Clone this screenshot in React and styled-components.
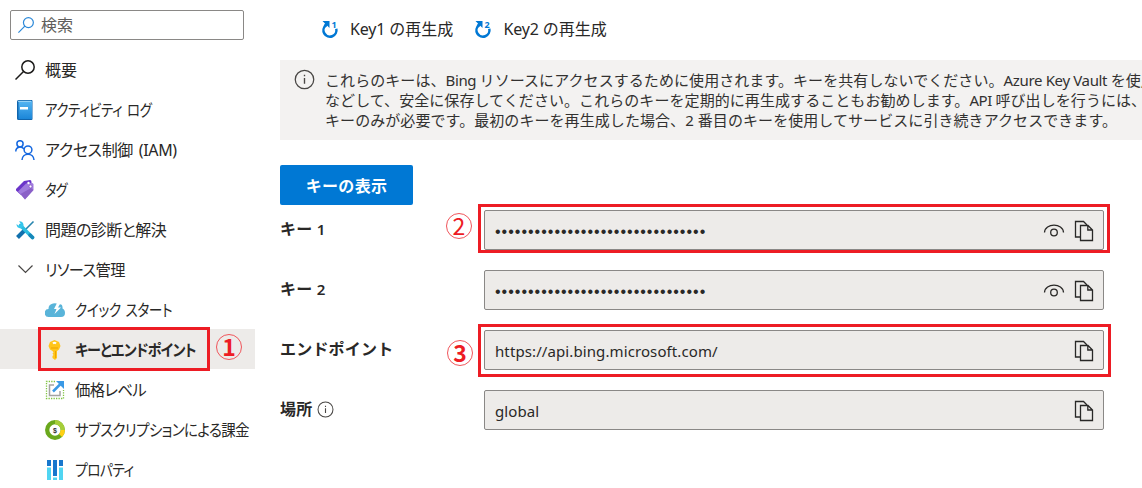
import React from "react";
import styled, { createGlobalStyle, css } from "styled-components";

const GlobalStyle = createGlobalStyle`
  * { box-sizing: border-box; }
  body {
    margin: 0;
    background: #fff;
    color: #292827;
    font-family: "Noto Sans", "Noto Sans CJK JP", sans-serif;
    font-size: 16px;
    overflow: hidden;
  }
`;

const Page = styled.div`
  position: relative;
  display: flex;
  width: 1142px;
  height: 488px;
  overflow: hidden;
`;

const Sidebar = styled.aside`
  flex: none;
  width: 255px;
  padding-top: 10px;
`;

const SearchBox = styled.div`
  display: flex;
  align-items: center;
  gap: 7px;
  width: 234px;
  height: 30px;
  margin: 0 0 9px 10px;
  padding-left: 7px;
  border: 1px solid #8a8886;
  border-radius: 2px;
  color: #605e5c;
  line-height: 20px;
`;

const NavItem = styled.div`
  display: flex;
  align-items: center;
  gap: 10px;
  height: 40px;
  padding-top: 2px;
  padding-left: ${(p) => (p.$nested ? 45 : 15)}px;
  background: ${(p) => (p.$active ? "#edebe9" : "transparent")};
  font-weight: ${(p) => (p.$active ? 700 : 400)};
  svg { flex: none; }
`;

const Label = styled.span`
  display: inline-block;
  white-space: nowrap;
  line-height: 24px;
  font-feature-settings: ${(p) => (p.$palt ? '"palt"' : "normal")};
  letter-spacing: ${(p) => p.$track || 0}px;
  word-spacing: ${(p) => (p.$palt ? 2 : 0)}px;
  transform: scaleX(${(p) => p.$narrow || 1});
  transform-origin: left center;
`;

const Main = styled.main`
  flex: none;
  width: 862px;
  margin-left: 25px;
`;

const Toolbar = styled.div`
  display: flex;
  align-items: center;
  gap: 21px;
  height: 60px;
  padding: 0 0 2px 41px;
`;

const ToolButton = styled.div`
  display: flex;
  align-items: center;
  gap: 8px;
  line-height: 22px;
  white-space: nowrap;
  span { margin-top: -1px; }
`;

const Latin = styled.span`
  letter-spacing: ${(p) => p.$track}px;
`;

const Notice = styled.section`
  display: flex;
  gap: 10px;
  height: 80px;
  padding: 10px 0 0 14px;
  background: #f3f2f1;
  color: #323130;
  font-size: 15px;
  line-height: 20px;
  svg { flex: none; margin-top: -1px; }
`;

const NoticeText = styled.div`
  white-space: nowrap;
  letter-spacing: 0.07px;
`;

const PrimaryButton = styled.div`
  display: flex;
  align-items: center;
  justify-content: center;
  width: 133px;
  height: 40px;
  margin: 25px 0 5px;
  border-radius: 2px;
  background: #0078d4;
  color: #fff;
  font-weight: 700;
  letter-spacing: 0.3px;
`;

const FieldRow = styled.div`
  display: flex;
  width: 824px;
  height: 40px;
  margin-bottom: 20px;
`;

const FieldLabel = styled.div`
  display: flex;
  align-items: center;
  gap: 5px;
  width: 204px;
  height: 35px;
  font-weight: 700;
  letter-spacing: 0.2px;
  white-space: nowrap;
  svg { margin-top: 3px; }
`;

const Digit = styled.span`
  font-size: 15px;
  font-weight: 600;
`;

const Field = styled.div`
  display: flex;
  align-items: center;
  width: 620px;
  height: 40px;
  padding: 2px 9px 0 10px;
  border: 1px solid #8a8886;
  border-radius: 2px;
  background: #edebe9;
  font-size: 15px;
  gap: 9px;
`;

const Value = styled.span`
  flex: 1;
  letter-spacing: ${(p) => p.$track || 0}px;
  ${(p) =>
    p.$masked &&
    css`
      padding-top: 2px;
      font-family: "Liberation Sans", sans-serif;
      font-size: 16px;
      letter-spacing: 1px;
    `}
`;

const Highlight = styled.div`
  position: absolute;
  left: ${(p) => p.$x}px;
  top: ${(p) => p.$y}px;
  width: ${(p) => p.$w}px;
  height: ${(p) => p.$h}px;
  border: 3px solid #ed1c24;
`;

const StepMark = styled.div`
  position: absolute;
  left: ${(p) => p.$x}px;
  top: ${(p) => p.$y}px;
  display: flex;
  align-items: center;
  justify-content: center;
  width: 26px;
  height: 26px;
  padding-bottom: 2px;
  border: 1.5px solid #f0555b;
  border-radius: 50%;
  color: #ed1c24;
  font: ${(p) => (p.$light ? 400 : 700)} 23px/22px "Noto Sans CJK JP", sans-serif;
`;

const Search = ({ size = 20, color = "#1b1a19", w = 1.5 }) => (
  <svg width={size} height={size} viewBox="0 0 20 20" fill="none" stroke={color} strokeWidth={w}>
    <circle cx="13" cy="7" r="6.2" />
    <path d="M8.5 11.5 0.5 19.5" />
  </svg>
);

const Book = () => (
  <svg width="20" height="20" viewBox="0 0 20 20">
    <defs><linearGradient id="book" x2="0" y2="1"><stop stopColor="#55b5f2" /><stop offset="1" stopColor="#1b86d8" /></linearGradient></defs>
    <path d="M3.5 0H16.500a1 1 0 0 1 1 1v18a1 1 0 0 1-1 1H3.500A1.500 1.500 0 0 1 2 18.500v-17A1.500 1.500 0 0 1 3.500 0Z" fill="#1065ad" />
    <path d="M3.500 1h13.500v18H3.500z" fill="url(#book)" />
    <path d="M3 1.300h13" stroke="#a6d9f8" />
    <path d="M5 7h8v2.500H5z" fill="#fff" />
  </svg>
);

const People = () => (
  <svg width="20" height="20" viewBox="0 0 20 20" fill="none" stroke="#1769e0" strokeWidth="1.500">
    <circle cx="5" cy="3.800" r="3.100" />
    <path d="M.8 11.500C.8 6.500 6.500 6 9 9" />
    <circle cx="13" cy="9.800" r="3.900" />
    <path d="M7 20c.5-7.800 11.500-7.800 12 0" />
  </svg>
);

const Tag = () => (
  <svg width="20" height="20" viewBox="0 0 20 20">
    <path d="M1 9 9 1l6-1q1.500 0 1.500 2v4L6 15 1 10.500Z" fill="#6b35c9" />
    <path d="m3 11.500 8-8 6-.5q1.500 0 1.500 1.500V10l-8.500 9.500Z" fill="#a07bdd" />
    <path d="m5.500 14 10.500-6 2.500 2-8.500 9.500Z" fill="#8055bd" opacity=".7" />
    <circle cx="13.500" cy="3" r="1.200" fill="#fff" />
    <circle cx="15.500" cy="6.500" r="1.400" fill="#fff" stroke="#7644bb" strokeWidth=".6" />
  </svg>
);

const Tools = () => (
  <svg width="20" height="20" viewBox="0 0 20 20" fill="none">
    <path d="M18.500 1.500 10 10" stroke="#2785ae" strokeWidth="1.600" />
    <path d="m10.500 9.500-8 8" stroke="#1170ad" strokeWidth="4" />
    <path d="m5.500 5.500 12 12" stroke="#2bbde0" strokeWidth="3.600" strokeLinecap="round" />
    <path d="M4 1.300q5 0 4.500 5L6 8.500Q1.500 8 1.500 4L4 6l2-2Z" fill="#35c6ec" />
    <path d="m15 15 2.500 2.500" stroke="#1787b8" strokeWidth="3.500" strokeLinecap="round" />
  </svg>
);

const Chevron = () => (
  <svg width="20" height="20" viewBox="0 0 20 20" fill="none" stroke="#484644" strokeWidth="1.200">
    <path d="m3.500 5.500 7 7 7-7" />
  </svg>
);

const Cloud = () => (
  <svg width="20" height="20" viewBox="0 0 20 20">
    <path d="M4 17a4 4 0 0 1-.5-8A5.500 5.500 0 0 1 8 3.500q3-1 5 1Q18 3 17.500 8.500q2.500 1 2.500 4.500 0 4-4 4Z" fill="#59b4d9" />
    <path d="m12 3-3 6h2.500L9.500 14 16 7.500h-3L15.500 3Z" fill="#fff" />
  </svg>
);

const Key = () => (
  <svg width="20" height="20" viewBox="0 0 20 20">
    <path d="M9.500 0 14 2l1.500 4L14 9.500 12 11v7l-2 2-2.500-2v-2l1-1-1-1.500 1-1-1-1.500L5 9.500 3.500 6 5 2Z" fill="#ffc51b" />
    <path d="M8 3.500q1.500-1.500 3 0" stroke="#fff" strokeWidth="2" fill="none" />
    <path d="M6 8h7M10.500 11v7" stroke="#efa300" strokeWidth="1" />
  </svg>
);

const Resize = () => (
  <svg width="20" height="20" viewBox="0 0 20 20" fill="none">
    <path d="M10 1.500H1.500v17h17V10" stroke="#7fc241" strokeWidth="1.300" strokeDasharray="1.300 1.200" />
    <path d="M9 5H4.500v10.500H15V11" stroke="#a3a3a3" strokeWidth="1.500" />
    <path d="m8 11.500 7.500-7.500" stroke="#3999e6" strokeWidth="2.500" />
    <path d="M11 1H19v8Z" fill="#3999e6" />
  </svg>
);

const Billing = () => (
  <svg width="20" height="20" viewBox="0 0 20 20">
    <g fill="none" strokeWidth="4.300">
      <circle cx="10" cy="10" r="7.800" stroke="#6aa81c" />
      <path d="M10 2.200A7.800 7.800 0 0 1 17.800 10" stroke="#a6ce39" />
      <path d="M17.800 10A7.800 7.800 0 0 1 15.500 15.500" stroke="#ffd013" />
    </g>
    <text x="10" y="12.500" textAnchor="middle" fontFamily="Liberation Sans, sans-serif" fontSize="7" fontWeight="700" fill="#333">$</text>
  </svg>
);

const Bars = () => (
  <svg width="20" height="20" viewBox="0 0 20 20">
    <path d="M2 0h4v20H2zM8 0h4v20H8zM14 0h4v20h-4z" fill="#50d5f2" />
    <path d="M2 0h4v6H2zM8 0h4v16H8zM14 0h4v6h-4z" fill="#1877cd" />
    <path d="M2 6h4v1.500H2zM8 16h4v1.500H8zM14 6h4v1.500h-4z" fill="#fff" />
  </svg>
);

const Regenerate = ({ n }) => (
  <svg width="21" height="20" viewBox="0 0 21 20">
    <path d="M4.800 6.200A6.500 6.500 0 1 0 15.300 9.800" fill="none" stroke="#0078d4" strokeWidth="2.500" />
    <path d="M1.500 2H8.500v7L6.300 6.800 4.500 8.500 2.800 6.500 4 4.500Z" fill="#0078d4" />
    <text x="10.500" y="8.500" fontFamily="Noto Sans, sans-serif" fontSize="9" fontWeight="700" fill="#0078d4">{n}</text>
  </svg>
);

const Info = ({ size }) => (
  <svg width={size} height={size} viewBox="0 0 20 20" fill="none" stroke="#484644">
    <circle cx="10" cy="10" r="8.800" strokeWidth="1.200" />
    <path d="M10 8.500V14M10 5.500v1.500" strokeWidth="1.300" />
  </svg>
);

const Eye = () => (
  <svg width="22" height="20" viewBox="0 0 22 20" fill="none" stroke="#292827" strokeWidth="1.300">
    <path d="M1.500 11.500C2 1.700 20 1.700 20.500 11.500" />
    <circle cx="11" cy="11.500" r="3.300" />
  </svg>
);

const Copy = () => (
  <svg width="20" height="22" viewBox="0 0 20 22" fill="none" stroke="#292827" strokeWidth="1.300">
    <path d="M6 17H1.500V1.500H9.500L13 5" />
    <path d="M6.500 5.500H14L18.500 10v10.500h-12zM13.800 5.500V10h4.700" />
  </svg>
);

const navItems = [
  { icon: Search, text: "概要" },
  { icon: Book, text: "アクティビティ ログ", palt: true, track: -0.45, narrow: 0.84 },
  { icon: People, text: "アクセス制御 (IAM)", palt: true, track: -0.35 },
  { icon: Tag, text: "タグ", palt: true, track: -0.75, narrow: 0.82 },
  { icon: Tools, text: "問題の診断と解決", palt: true, track: -0.55 },
  { icon: Chevron, text: "リソース管理", palt: true, track: -0.6, narrow: 0.95 },
  { icon: Cloud, text: "クイック スタート", palt: true, track: -0.5, narrow: 0.855, nested: true },
  { icon: Key, text: "キーとエンドポイント", palt: true, track: -0.75, narrow: 0.875, nested: true, active: true },
  { icon: Resize, text: "価格レベル", palt: true, track: -0.7, narrow: 0.96, nested: true },
  { icon: Billing, text: "サブスクリプションによる課金", palt: true, track: -0.7, narrow: 0.906, nested: true },
  { icon: Bars, text: "プロパティ", palt: true, track: -0.65, narrow: 0.86, nested: true },
];

export default function App() {
  return (
    <Page>
      <GlobalStyle />
      <Sidebar>
        <SearchBox>
          <Search size={16} color="#2b88d8" />
          <Label>検索</Label>
        </SearchBox>
        {navItems.map(({ icon: Icon, text, palt, track, narrow, nested, active }) => (
          <NavItem key={text} $nested={nested} $active={active}>
            <Icon />
            <Label $palt={palt} $track={track} $narrow={narrow}>{text}</Label>
          </NavItem>
        ))}
      </Sidebar>
      <Main>
        <Toolbar>
          {["1", "2"].map((n) => (
            <ToolButton key={n}>
              <Regenerate n={n} />
              <span><Latin $track={-0.15}>Key{n} </Latin>の再生成</span>
            </ToolButton>
          ))}
        </Toolbar>
        <Notice>
          <Info size={21} />
          <NoticeText>
            これらのキーは、<Latin $track={-0.4}>Bing </Latin>リソースにアクセスするために使用されます。キーを共有しないでください。<Latin $track={-0.35}>Azure Key Vault </Latin>を使用
            <br />
            などして、安全に保存してください。これらのキーを定期的に再生成することもお勧めします。<Latin $track={-0.4}>API </Latin>呼び出しを行うには、
            <br />
            キーのみが必要です。最初のキーを再生成した場合、2 番目のキーを使用してサービスに引き続きアクセスできます。
          </NoticeText>
        </Notice>
        <PrimaryButton>キーの表示</PrimaryButton>
        <FieldRow>
          <FieldLabel><span>キー <Digit>1</Digit></span></FieldLabel>
          <Field><Value $masked>{"•".repeat(32)}</Value><Eye /><Copy /></Field>
        </FieldRow>
        <FieldRow>
          <FieldLabel><span>キー <Digit>2</Digit></span></FieldLabel>
          <Field><Value $masked>{"•".repeat(32)}</Value><Eye /><Copy /></Field>
        </FieldRow>
        <FieldRow>
          <FieldLabel>エンドポイント</FieldLabel>
          <Field><Value $track={0.1}>https://api.bing.microsoft.com/</Value><Copy /></Field>
        </FieldRow>
        <FieldRow>
          <FieldLabel>場所 <Info size={17} /></FieldLabel>
          <Field><Value $track={0.1}>global</Value><Copy /></Field>
        </FieldRow>
      </Main>
      <Highlight $x={38} $y={327} $w={172} $h={44} />
      <Highlight $x={478} $y={204} $w={632} $h={49} />
      <Highlight $x={478} $y={324} $w={633} $h={53} />
      <StepMark $x={216} $y={334}>1</StepMark>
      <StepMark $x={446} $y={213} $light>2</StepMark>
      <StepMark $x={447} $y={340}>3</StepMark>
    </Page>
  );
}
